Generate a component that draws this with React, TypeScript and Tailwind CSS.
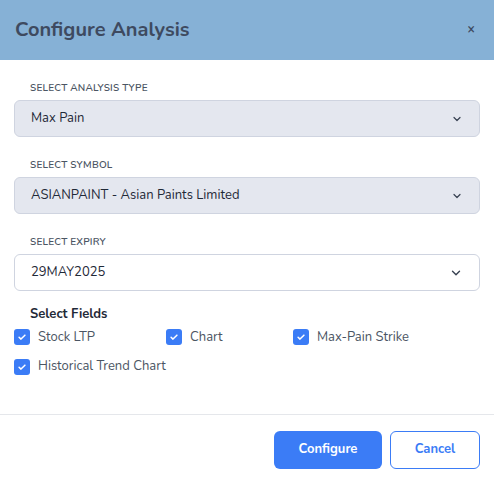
import React from "react";

const Chevron = ({ size = 12 }: { size?: number }) => (
  <svg width={size} height={size} viewBox="0 0 16 16" fill="none">
    <path d="M4 6l4 4 4-4" stroke="#374151" strokeWidth="1.6" strokeLinecap="round" strokeLinejoin="round" />
  </svg>
);

const Check = ({ label }: { label: string }) => (
  <div className="flex items-center gap-[8px]">
    <span className="w-[16px] h-[16px] rounded-[3px] bg-[#3b7cf6] flex items-center justify-center">
      <svg width="10" height="10" viewBox="0 0 12 12" fill="none">
        <path d="M2.5 6.3l2.3 2.2L9.5 3.8" stroke="white" strokeWidth="1.8" strokeLinecap="round" strokeLinejoin="round" />
      </svg>
    </span>
    <span className="text-[13px] text-[#4b5563]">{label}</span>
  </div>
);

const Field = ({ label, value, filled, mt }: { label: string; value: string; filled: boolean; mt: string }) => (
  <div className={mt}>
    <div className="pl-[16px] text-[10px] font-semibold tracking-[0.2px] text-[#4b5563] leading-[12px]">{label}</div>
    <div
      className={`mt-[6px] h-[37px] rounded-[6px] border border-[#cfd4e0] flex items-center justify-between pl-[16px] pr-[16px] ${
        filled ? "bg-[#e4e7ef]" : "bg-white"
      }`}
    >
      <span className="text-[13px] text-[#1f2937]">{value}</span>
      <Chevron size={filled ? 12 : 14} />
    </div>
  </div>
);

export default function App() {
  return (
    <div className="w-[494px] h-[483px] bg-white flex flex-col" style={{ fontFamily: "Nunito, Lato, 'Noto Sans', sans-serif" }}>
      <div className="h-[60px] bg-[#86b1d6] flex items-center justify-between pl-[15px] pr-[19px]">
        <span className="text-[20px] font-bold text-[#3e4a60]">Configure Analysis</span>
        <span className="text-[13px] font-bold text-[#3e4a60]">×</span>
      </div>
      <div className="px-[14px]">
        <Field mt="mt-[22px]" label="SELECT ANALYSIS TYPE" value="Max Pain" filled />
        <Field mt="mt-[22px]" label="SELECT SYMBOL" value="ASIANPAINT - Asian Paints Limited" filled />
        <Field mt="mt-[22px]" label="SELECT EXPIRY" value="29MAY2025" filled={false} />
        <div className="mt-[14px] pl-[16px] text-[13px] font-bold text-[#1f2937]">Select Fields</div>
        <div className="mt-[3px] flex">
          <div className="w-[152px]"><Check label="Stock LTP" /></div>
          <div className="w-[127px]"><Check label="Chart" /></div>
          <div><Check label="Max-Pain Strike" /></div>
        </div>
        <div className="mt-[10px]"><Check label="Historical Trend Chart" /></div>
      </div>
      <div className="mt-[37px] border-t border-[#e5e7eb]" />
      <div className="flex justify-end gap-[8px] pr-[14px] mt-[16px]">
        <button className="w-[108px] h-[38px] rounded-[6px] bg-[#3b7cf6] text-white text-[13px] font-bold">Configure</button>
        <button className="w-[90px] h-[38px] rounded-[6px] border border-[#3b7cf6] bg-white text-[#3b7cf6] text-[13px] font-bold">Cancel</button>
      </div>
    </div>
  );
}
